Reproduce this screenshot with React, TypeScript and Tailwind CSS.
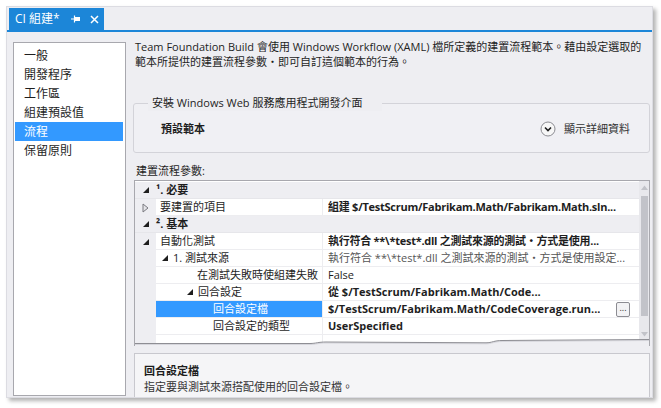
import type { ReactNode } from "react";

const navItems = ["一般", "開發程序", "工作區", "組建預設值", "流程", "保留原則"];

function Expanded() {
  return (
    <svg width="6" height="6" viewBox="0 0 6 6">
      <path d="M6 0 L6 6 L0 6 Z" fill="#1e1e1e" />
    </svg>
  );
}

function Collapsed() {
  return (
    <svg width="7" height="10" viewBox="0 0 7 10">
      <path d="M1 1 L6 5 L1 9 Z" fill="#e4e4e8" stroke="#7a7a80" strokeWidth="1" />
    </svg>
  );
}

function CategoryRow({ label }: { label: ReactNode }) {
  return (
    <div className="flex h-[17px] items-center bg-[#eeeef2] border-b border-[#e6e6ea]">
      <div className="flex w-[21px] justify-center">
        <Expanded />
      </div>
      <span className="font-bold text-[#1e1e1e]">{label}</span>
    </div>
  );
}

type ItemProps = {
  name: string;
  indent: string;
  gutter?: ReactNode;
  expander?: ReactNode;
  value?: string;
  bold?: boolean;
  tight?: boolean;
  muted?: boolean;
  selected?: boolean;
  button?: boolean;
};

function ItemRow({ name, indent, gutter, expander, value, bold, tight, muted, selected, button }: ItemProps) {
  return (
    <div className="flex h-[17px]">
      <div className="flex w-[21px] items-center justify-center bg-[#eeeef2]">{gutter}</div>
      <div
        className={`flex w-[167px] items-center overflow-hidden whitespace-nowrap border-b border-r border-[#ededf0] ${indent} ${
          selected ? "bg-[#3399ff] text-white" : "bg-white text-[#1e1e1e]"
        }`}
      >
        {expander && <span className="mr-[5px] flex items-center">{expander}</span>}
        {name}
      </div>
      <div
        className={`flex min-w-0 flex-1 items-center justify-between whitespace-nowrap border-b border-[#ededf0] bg-white pl-[5px] ${
          button ? "pr-[9px]" : "pr-[2px]"
        }`}
      >
        <span
          className={`min-w-0 overflow-hidden ${tight ? "tracking-[-0.25px]" : ""} ${
            bold ? "font-bold text-[#1e1e1e]" : muted ? "text-[#555]" : "text-[#1e1e1e]"
          }`}
        >
          {value}
        </span>
        {button && (
          <span className="ml-[6px] flex h-[15px] w-[14px] shrink-0 items-start justify-center rounded-[2px] border border-[#8c8c92] bg-[#f2f2f4] text-[9px] leading-[9px] text-[#333]">
            ...
          </span>
        )}
      </div>
    </div>
  );
}

export default function App() {
  return (
    <div className="h-[408px] w-[661px] overflow-hidden bg-white pl-[6px] pt-[6px] font-['Open_Sans','Noto_Sans_CJK_TC',sans-serif] text-[11px] text-[#1e1e1e]">
      <div className="flex h-[392px] w-[647px] flex-col overflow-hidden border border-[#dcdce2] bg-[#eeeef2] shadow-[3px_3px_4px_rgba(0,0,0,0.3)]">
        {/* tab strip */}
        <div className="flex h-[23px] items-end pl-[2px]">
          <div className="flex h-[22px] w-[95px] items-center bg-[#1c86d8] pl-[6px] text-[12px] text-white">
            <span className="leading-[16px]">CI 組建*</span>
            <svg className="ml-[11px]" width="10" height="8" viewBox="0 0 10 8">
              <path d="M0 4 H3.5 M3.5 0.5 V7.5" stroke="#fff" strokeWidth="1.2" />
              <rect x="4" y="2" width="5" height="4" fill="#fff" />
            </svg>
            <svg className="ml-[9px]" width="9" height="9" viewBox="0 0 9 9">
              <path d="M1 1 L8 8 M8 1 L1 8" stroke="#fff" strokeWidth="1.5" />
            </svg>
          </div>
        </div>
        <div className="h-[2px] bg-[#1c86d8]" />

        <div className="flex min-h-0 flex-1 pl-[6px]">
          {/* left nav */}
          <div className="mb-[1px] mt-[10px] w-[113px] border border-[#a8a8ae] bg-white pl-px pr-[2px] pt-[3px] text-[12px]">
            {navItems.map((item) => (
              <div
                key={item}
                className={`flex h-[19px] items-center pl-[9px] ${
                  item === "流程" ? "bg-[#3399ff] text-white" : "text-[#1e1e1e]"
                }`}
              >
                {item}
              </div>
            ))}
          </div>

          {/* content */}
          <div className="ml-[7px] flex w-[517px] flex-col">
            <p className="whitespace-nowrap px-[2px] pt-[7px] leading-[15px]">
              Team Foundation Build 會使用 Windows Workflow (XAML) 檔所定義的建置流程範本。藉由設定選取的
              <br />
              範本所提供的建置流程參數‧即可自訂這個範本的行為。
            </p>

            <div className="relative mt-[34px] flex h-[50px] items-center justify-between rounded-[3px] border border-[#d3d3d9] bg-[#f0f0f4] pl-[27px] pr-[19px]">
              <span className="absolute -top-[9px] left-[14px] bg-[#eeeef2] px-[4px] pr-[20px] leading-[16px]">
                安裝 Windows Web 服務應用程式開發介面
              </span>
              <span className="mt-[2px] font-bold">預設範本</span>
              <span className="mt-[2px] flex items-center">
                <svg width="16" height="16" viewBox="0 0 16 16">
                  <circle cx="8" cy="8" r="7" fill="#f7f7f7" stroke="#8c8c92" />
                  <path d="M5 6.5 L8 9.5 L11 6.5" fill="none" stroke="#1e1e1e" strokeWidth="1.6" />
                </svg>
                <span className="ml-[8px] text-[#333]">顯示詳細資料</span>
              </span>
            </div>

            <div className="mt-[10px] px-[3px] leading-[16px]">建置流程參數:</div>

            {/* parameter grid */}
            <div className="relative ml-px mt-px flex h-[166px] overflow-hidden border-l border-r border-t border-[#a8a8ae] bg-white">
              <div className="min-w-0 flex-1 pt-px">
                <CategoryRow label="¹. 必要" />
                <ItemRow
                  name="要建置的項目"
                  indent="pl-[4px]"
                  gutter={<Collapsed />}
                  value="組建 $/TestScrum/Fabrikam.Math/Fabrikam.Math.sln..."
                  bold
                  tight
                />
                <CategoryRow label="². 基本" />
                <ItemRow
                  name="自動化測試"
                  indent="pl-[4px]"
                  gutter={<Expanded />}
                  value="執行符合 **\*test*.dll 之測試來源的測試‧方式是使用..."
                  bold
                  tight
                />
                <ItemRow
                  name="1. 測試來源"
                  indent="pl-[6px]"
                  expander={<Expanded />}
                  value="執行符合 **\*test*.dll 之測試來源的測試‧方式是使用設定..."
                  muted
                />
                <ItemRow name="在測試失敗時使組建失敗" indent="pl-[41px]" value="False" />
                <ItemRow
                  name="回合設定"
                  indent="pl-[31px]"
                  expander={<Expanded />}
                  value="從 $/TestScrum/Fabrikam.Math/Code..."
                  bold
                />
                <ItemRow
                  name="回合設定檔"
                  indent="pl-[57px]"
                  value="$/TestScrum/Fabrikam.Math/CodeCoverage.run..."
                  bold
                  selected
                  button
                />
                <ItemRow name="回合設定的類型" indent="pl-[57px]" value="UserSpecified" bold />
                <ItemRow name="" indent="pl-[57px]" value="" />
              </div>
              {/* scrollbar */}
              <div className="flex w-[10px] flex-col items-center bg-[#e8e8ec]">
                <svg className="mt-[4px]" width="7" height="5" viewBox="0 0 7 5">
                  <path d="M0 5 L3.5 0.5 L7 5 Z" fill="#c2c3c9" />
                </svg>
                <div className="mt-[6px] h-[120px] w-[7px] bg-[#c2c3c9]" />
                <svg className="mt-[16px]" width="7" height="5" viewBox="0 0 7 5">
                  <path d="M0 0 L3.5 4.5 L7 0 Z" fill="#c2c3c9" />
                </svg>
              </div>
              {/* torn edge */}
              <svg
                className="absolute bottom-0 left-[-1px]"
                width="518"
                height="9"
                viewBox="0 0 518 9"
                preserveAspectRatio="none"
              >
                <path
                  d="M0 6.5 L176 6.5 C182 6.5 184 5 192 5 L352 5.8 C358 5.8 360 3.5 368 3.5 L518 2.5 L518 9 L0 9 Z"
                  fill="#eeeef2"
                />
                <path
                  d="M0 7.5 L176 7.5 C182 7.5 184 6 192 6 L352 6.8 C358 6.8 360 4.5 368 4.5 L518 3.5"
                  fill="none"
                  stroke="#d6d6dc"
                  strokeWidth="1"
                />
                <path
                  d="M0 6.5 L176 6.5 C182 6.5 184 5 192 5 L352 5.8 C358 5.8 360 3.5 368 3.5 L518 2.5"
                  fill="none"
                  stroke="#8e8e94"
                  strokeWidth="1"
                />
              </svg>
            </div>

            {/* description panel */}
            <div className="ml-px mt-[7px] flex-1 border-l border-r border-t border-[#c8c8ce] bg-[#f5f5f7] pl-[9px] pt-[9px]">
              <div className="font-bold leading-[16px]">回合設定檔</div>
              <div className="leading-[15px] text-[#333]">指定要與測試來源搭配使用的回合設定檔。</div>
            </div>
          </div>
        </div>
      </div>
    </div>
  );
}
